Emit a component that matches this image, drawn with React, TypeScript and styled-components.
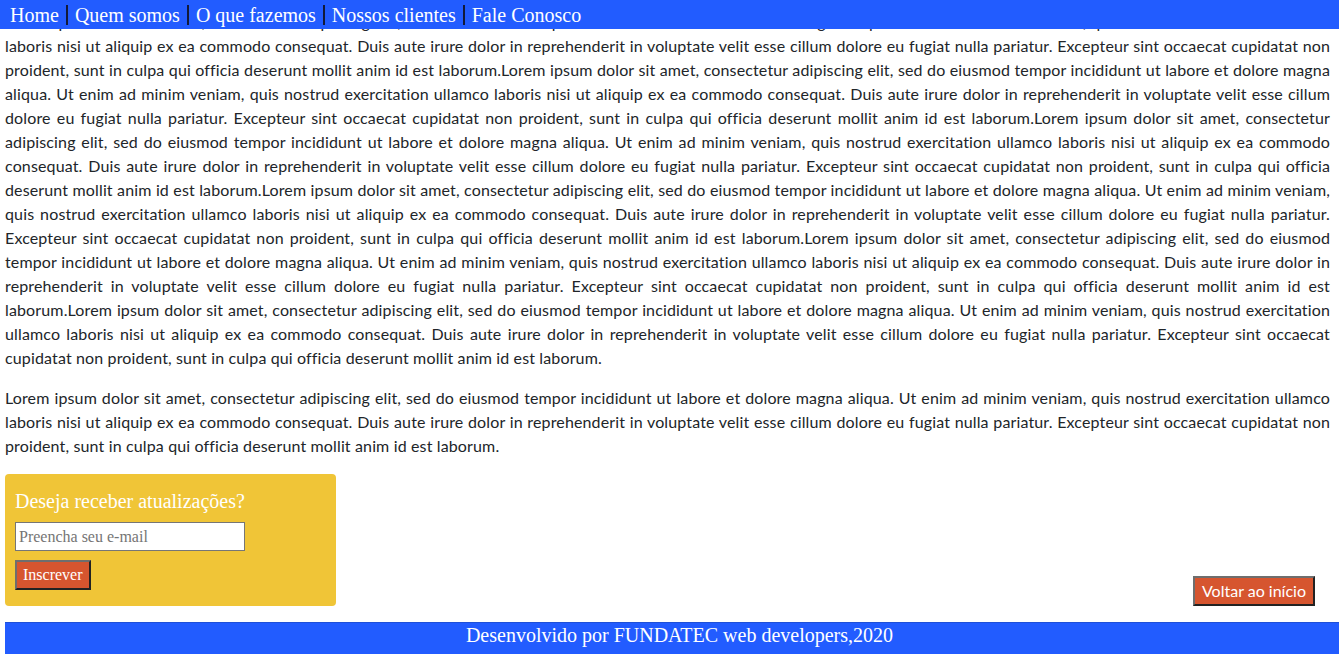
import React from "react";
import styled, { createGlobalStyle } from "styled-components";

const Global = createGlobalStyle`
  html, body { margin: 0; padding: 0; background: #fff; }
  body {
    font-family: Lato, "Noto Sans", sans-serif;
    font-size: 16px;
    line-height: 24px;
    color: #212529;
  }
  * { box-sizing: border-box; }
`;

const Nav = styled.nav`
  position: fixed;
  top: 0;
  left: 0;
  right: 0;
  height: 29px;
  background: #225cff;
  display: flex;
  align-items: center;
  padding-left: 3px;
  z-index: 10;
`;

const NavLink = styled.a<{ $first?: boolean }>`
  font-family: "Liberation Serif", "Times New Roman", serif;
  font-size: 20px;
  line-height: 20px;
  color: #fff;
  text-decoration: none;
  padding: 0 7px;
  border-left: ${(p) => (p.$first ? "none" : "2px solid #121a3a")};
`;

const Main = styled.main`
  padding: 10px 9px 0 5px;
`;

const Paragraph = styled.p`
  margin: 0 0 16px;
  text-align: justify;
  letter-spacing: 0.14px;
`;

const BottomRow = styled.div`
  display: flex;
  justify-content: space-between;
  align-items: flex-end;
  padding-right: 15px;
`;

const Card = styled.section`
  width: 331px;
  background: #f0c537;
  border-radius: 4px;
  padding: 16px 10px 16px 10px;
`;

const CardTitle = styled.h3`
  margin: 0 0 9px;
  font-family: "Liberation Serif", "Times New Roman", serif;
  font-weight: normal;
  font-size: 20px;
  line-height: 23px;
  color: #fff;
`;

const EmailInput = styled.input`
  display: block;
  width: 230px;
  height: 29px;
  margin: 0 0 9px;
  padding: 0 3px;
  border: 1px solid #767676;
  font-family: "Liberation Serif", "Times New Roman", serif;
  font-size: 16px;
  color: #333;
  background: #fff;
  &::placeholder { color: #757575; }
`;

const ActionButton = styled.button<{ $sans?: boolean }>`
  height: 30px;
  padding: 0 ${(p) => (p.$sans ? "7px" : "6px")};
  background: #d6552f;
  color: #fff;
  border: 2px solid;
  border-color: #6e6e6e #222 #222 #6e6e6e;
  font-family: ${(p) =>
    p.$sans ? 'Lato, "Noto Sans", sans-serif' : '"Liberation Serif", "Times New Roman", serif'};
  font-size: 16px;
  line-height: 24px;
  cursor: pointer;
`;

const Footer = styled.footer`
  margin: 16px 0 0 5px;
  height: 32px;
  background: #225cff;
  border-top: 1px solid #1e50d8;
  color: #fff;
  font-family: "Liberation Serif", "Times New Roman", serif;
  font-size: 20px;
  line-height: 24px;
  text-align: center;
  padding-left: 15px;
`;

const LOREM =
  "Lorem ipsum dolor sit amet, consectetur adipiscing elit, sed do eiusmod tempor incididunt ut labore et dolore magna aliqua. Ut enim ad minim veniam, quis nostrud exercitation ullamco laboris nisi ut aliquip ex ea commodo consequat. Duis aute irure dolor in reprehenderit in voluptate velit esse cillum dolore eu fugiat nulla pariatur. Excepteur sint occaecat cupidatat non proident, sunt in culpa qui officia deserunt mollit anim id est laborum.";

const links = ["Home", "Quem somos", "O que fazemos", "Nossos clientes", "Fale Conosco"];

export default function App() {
  return (
    <>
      <Global />
      <Nav>
        {links.map((l, i) => (
          <NavLink key={l} href="#" $first={i === 0}>
            {l}
          </NavLink>
        ))}
      </Nav>
      <Main>
        <Paragraph>{Array(6).fill(LOREM).join("")}</Paragraph>
        <Paragraph>{LOREM}</Paragraph>
        <BottomRow>
          <Card>
            <CardTitle>Deseja receber atualizações?</CardTitle>
            <EmailInput type="email" placeholder="Preencha seu e-mail" />
            <ActionButton>Inscrever</ActionButton>
          </Card>
          <ActionButton $sans>Voltar ao início</ActionButton>
        </BottomRow>
      </Main>
      <Footer>Desenvolvido por FUNDATEC web developers,2020</Footer>
    </>
  );
}
